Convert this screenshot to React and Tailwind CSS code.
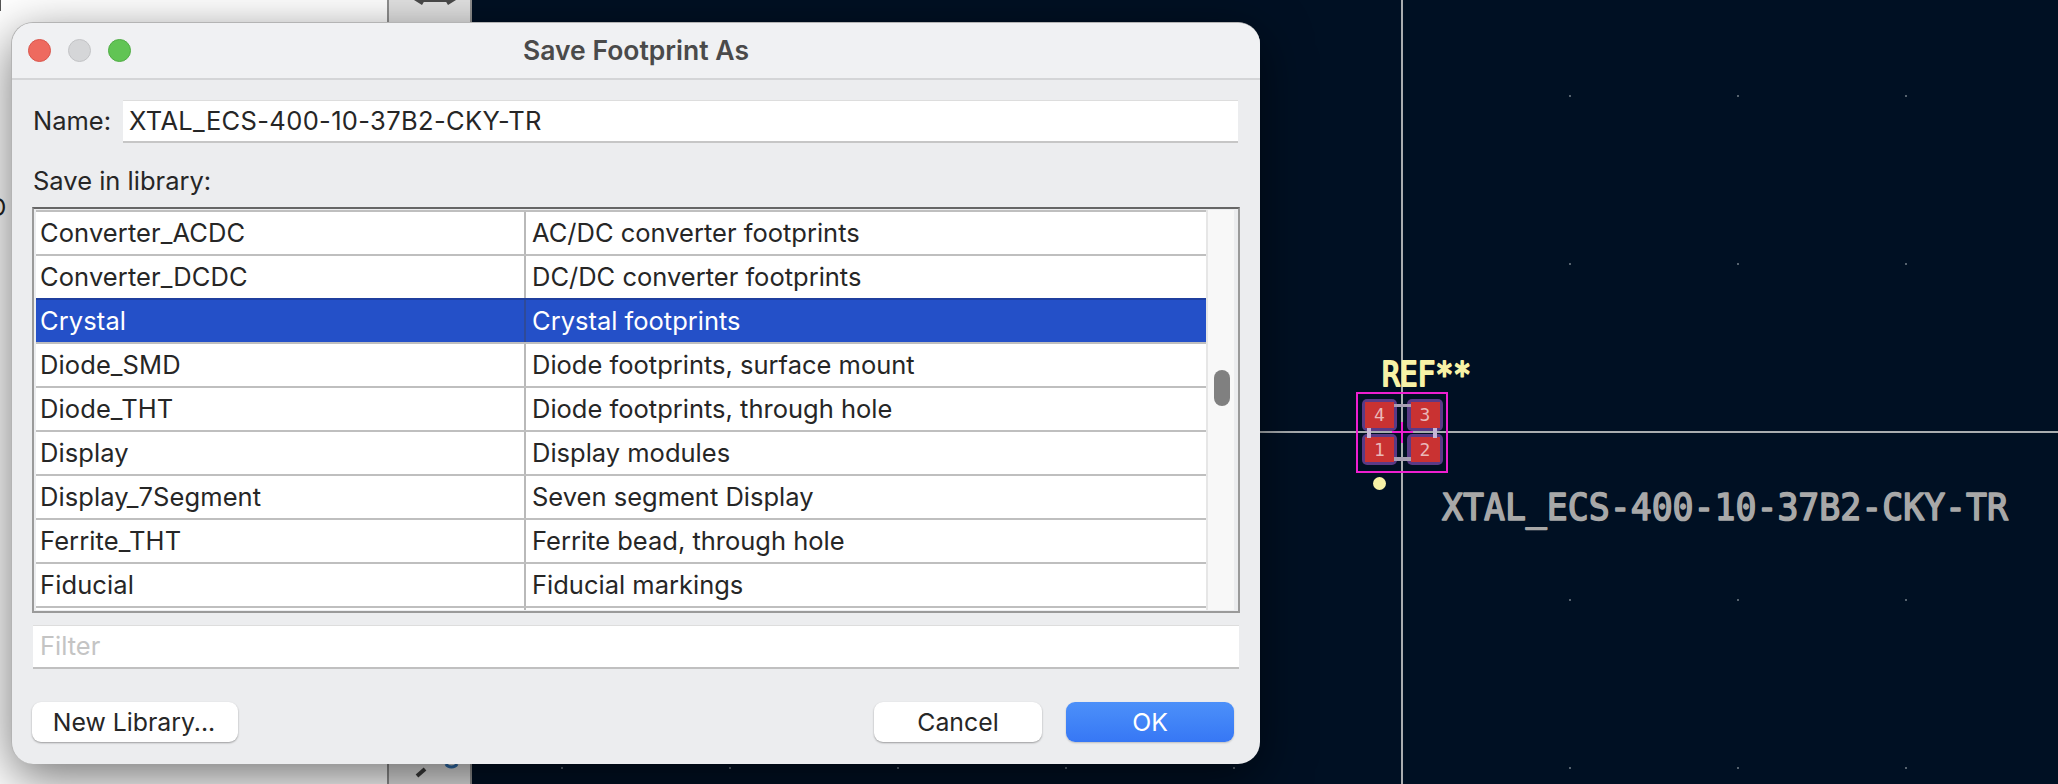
import React from "react";

const rows = [
  ["Converter_ACDC", "AC/DC converter footprints"],
  ["Converter_DCDC", "DC/DC converter footprints"],
  ["Crystal", "Crystal footprints", true],
  ["Diode_SMD", "Diode footprints, surface mount"],
  ["Diode_THT", "Diode footprints, through hole"],
  ["Display", "Display modules"],
  ["Display_7Segment", "Seven segment Display"],
  ["Ferrite_THT", "Ferrite bead, through hole"],
  ["Fiducial", "Fiducial markings"],
];

const gridX = [562, 730, 898, 1066, 1234, 1570, 1738, 1906];
const gridY = [96, 264, 600, 768];

function Canvas() {
  return (
    <svg viewBox="472 0 1586 784" className="block w-full h-full">
      {gridY.flatMap((y) =>
        gridX.map((x) => <rect key={x + "-" + y} x={x - 1} y={y - 1} width="2" height="2" fill="#56626e" />)
      )}
      <rect x="1401" y="0" width="2" height="784" fill="#a9adb0" />
      <rect x="472" y="431" width="1586" height="2" fill="#a9adb0" />

      <rect x="1357" y="393" width="90" height="79" fill="none" stroke="#ee1fd0" strokeWidth="2" />

      <rect x="1362" y="399" width="35" height="32" rx="5" fill="#5b3a86" />
      <rect x="1407" y="399" width="36" height="32" rx="5" fill="#5b3a86" />
      <rect x="1362" y="434" width="35" height="31" rx="5" fill="#5b3a86" />
      <rect x="1407" y="434" width="36" height="31" rx="5" fill="#5b3a86" />
      <rect x="1365" y="402" width="29" height="26" fill="#c93232" />
      <rect x="1411" y="402" width="29" height="26" fill="#c93232" />
      <rect x="1365" y="437" width="29" height="25" fill="#c93232" />
      <rect x="1411" y="437" width="29" height="25" fill="#c93232" />

      <rect x="1394" y="404" width="17" height="3" fill="#a89fb4" />
      <rect x="1394" y="457" width="17" height="4" fill="#a89fb4" />
      <rect x="1367" y="428" width="4" height="10" fill="#c6b6d6" />
      <rect x="1433" y="428" width="4" height="10" fill="#c6b6d6" />

      <rect x="1392" y="431" width="21" height="2" fill="#ee1fd0" />
      <rect x="1401" y="422" width="2" height="21" fill="#ee1fd0" />

      <g className="font-['DejaVu_Sans_Mono',monospace]" fontSize="18" fill="#eab9b9" textAnchor="middle">
        <text x="1379.5" y="421">4</text>
        <text x="1425" y="421">3</text>
        <text x="1379.5" y="456">1</text>
        <text x="1425" y="456">2</text>
      </g>

      <circle cx="1379.5" cy="483.5" r="6.5" fill="#f7f2a6" />

      <text
        x="1382"
        y="386"
        textLength="89"
        lengthAdjust="spacingAndGlyphs"
        fontSize="34"
        fill="#f7f2a6"
        stroke="#f7f2a6"
        strokeWidth="2"
        strokeLinejoin="round"
        className="font-['DejaVu_Sans_Mono',monospace]"
      >
        REF**
      </text>
      <text
        x="1442"
        y="520"
        textLength="566"
        lengthAdjust="spacingAndGlyphs"
        fontSize="37"
        fill="#a8a8a8"
        stroke="#a8a8a8"
        strokeWidth="1.6"
        strokeLinejoin="round"
        className="font-['DejaVu_Sans_Mono',monospace]"
      >
        XTAL_ECS-400-10-37B2-CKY-TR
      </text>
    </svg>
  );
}

function Light({ color, edge }) {
  return <span className={"block w-[23px] h-[23px] rounded-full border " + color + " " + edge} />;
}

function Row({ name, desc, selected }) {
  return (
    <div
      className={
        "grid grid-cols-[490px_1fr] h-[44px] border-t-2 " +
        (selected ? "bg-[#2450c8] text-white border-[#1f3f9f]" : "bg-white text-[#262626] border-[#bfbfbf]")
      }
    >
      <div className={"pl-[4px] leading-[41px] tracking-[0.1px] border-r-2 " + (selected ? "border-[#2f4a98]" : "border-[#b9b9b9]")}>
        {name}
      </div>
      <div className="pl-[6px] leading-[41px]">{desc}</div>
    </div>
  );
}

function Button({ className, children }) {
  return (
    <button className={"h-[40px] rounded-[9px] text-[24.8px] leading-[38px] text-center " + className}>
      {children}
    </button>
  );
}

export default function App() {
  return (
    <div className="relative w-[2058px] h-[784px] overflow-hidden flex font-['Inter',sans-serif] text-[25.5px] text-[#262626]">
      <div className="relative w-[387px] bg-white overflow-hidden">
        <span className="absolute left-0 top-0 block w-[1px] h-[11px] bg-[#555555]" />
        <span className="absolute -left-[11px] top-[194px] text-[24px] leading-[28px] text-[#222222]">D</span>
      </div>
      <div className="relative w-[85px] bg-[#e2e2e2] border-x-[2px] border-[#8f8f8f] overflow-hidden">
        <svg viewBox="0 0 81 10" className="absolute left-0 top-0 w-[81px] h-[10px]">
          <path d="M25 0 L33 5 L36 0 Z M67 0 L59 5 L56 0 Z" fill="#4a4a4a" />
          <rect x="30" y="0" width="32" height="2" fill="#4a4a4a" />
        </svg>
        <svg viewBox="0 0 81 784" className="absolute left-0 top-0 w-[81px] h-[784px]">
          <path d="M28 776 L36 769" stroke="#3c3c3c" strokeWidth="4" fill="none" />
          <path d="M57 764 A6 5 0 0 0 68 764" stroke="#2f6fb0" strokeWidth="3" fill="none" />
        </svg>
      </div>
      <div className="flex-1 bg-[#001023]">
        <Canvas />
      </div>

      <div className="absolute left-[11px] top-[22px] w-[1249px] h-[742px] flex flex-col rounded-[22px] bg-[#ecedef] border-l border-t border-[#b4b4b4] shadow-[0_14px_50px_rgba(0,0,0,0.55)] overflow-hidden">
        <div className="h-[57px] shrink-0 flex items-center relative bg-[#f0f1f3] border-b-2 border-[#d4d5d7]">
          <div className="flex items-center gap-[17px] pl-[16px]">
            <Light color="bg-[#ee6a5f]" edge="border-[#d9574d]" />
            <Light color="bg-[#d5d6d8]" edge="border-[#c2c3c5]" />
            <Light color="bg-[#61c454]" edge="border-[#51ad45]" />
          </div>
          <div className="absolute inset-0 flex items-center justify-center text-[26.5px] font-semibold text-[#4a4a4a]">
            Save Footprint As
          </div>
        </div>

        <div className="flex-1 flex flex-col pl-[20px] pr-[20px]">
          <div className="flex items-center mt-[20px] h-[43px]">
            <span className="w-[91px] pl-[1px] pb-[1px] shrink-0">Name:</span>
            <div className="flex-1 mr-[2px] h-[43px] pl-[6px] leading-[40px] tracking-[0.35px] bg-white border-t border-[#dddddd] border-b-2 border-b-[#c6c6c6]">
              XTAL_ECS-400-10-37B2-CKY-TR
            </div>
          </div>

          <div className="mt-[22px] pl-[1px] h-[32px] leading-[32px]">Save in library:</div>

          <div className="mt-[10px] h-[406px] flex border-x-2 border-b-2 border-t-2 border-x-[#9a9a9a] border-b-[#9a9a9a] border-t-[#666666] pt-[1px] pb-[1px] pl-[2px] pr-[4px] bg-[#ecedef]">
            <div className="w-[1170px] shrink-0 flex flex-col bg-white overflow-hidden">
              {rows.map((r) => (
                <Row key={r[0]} name={r[0]} desc={r[1]} selected={r[2]} />
              ))}
              <div className="grid grid-cols-[490px_1fr] flex-1 border-t-2 border-[#bfbfbf]">
                <div className="border-r-2 border-[#b9b9b9]" />
                <div />
              </div>
            </div>
            <div className="flex-1 relative bg-[#f8f8f8] border-l-2 border-[#e6e6e6]">
              <span className="absolute left-[6px] top-[160px] block w-[16px] h-[36px] rounded-full bg-[#808080]" />
            </div>
          </div>

          <div className="mt-[12px] mr-[1px] ml-[1px] h-[44px] pl-[7px] leading-[40px] bg-white border-t border-[#dddddd] border-b-2 border-b-[#c0c0c0] text-[#c4c4c4]">
            Filter
          </div>

          <div className="mt-[33px] flex items-center">
            <Button className="w-[206px] pr-[2px] bg-white text-[#262626] shadow-[0_1px_2px_rgba(0,0,0,0.35)]">New Library...</Button>
            <div className="flex-1" />
            <Button className="w-[168px] bg-white text-[#262626] shadow-[0_1px_2px_rgba(0,0,0,0.35)]">Cancel</Button>
            <Button className="w-[168px] ml-[24px] mr-[6px] bg-gradient-to-b from-[#4c90f9] to-[#3777f5] text-white shadow-[0_1px_2px_rgba(0,0,0,0.2)]">OK</Button>
          </div>
        </div>
      </div>
    </div>
  );
}
